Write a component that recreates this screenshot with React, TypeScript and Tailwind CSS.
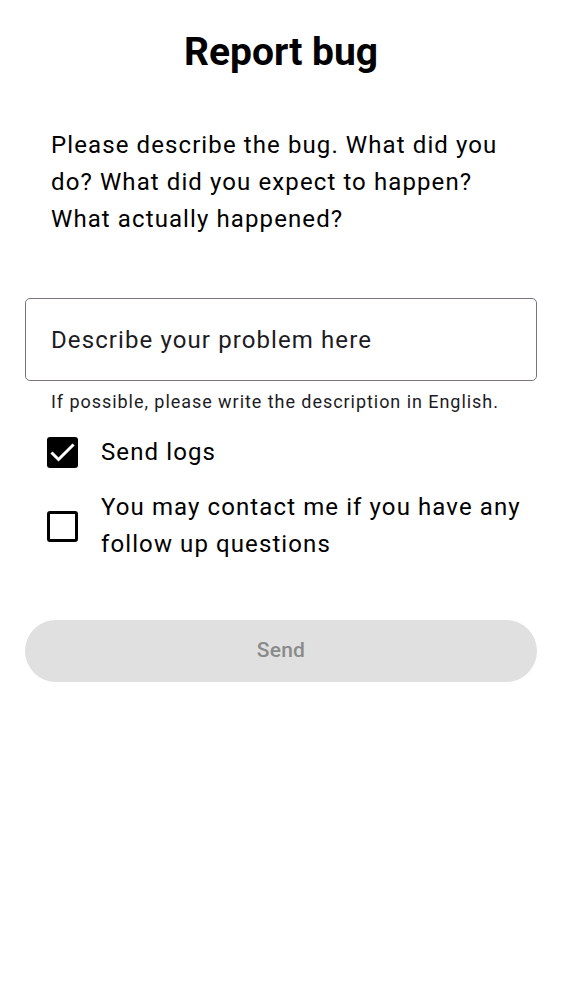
import { useState } from "react";

const CheckIcon = () => (
  <svg viewBox="0 0 31 31" className="w-[31px] h-[31px]" fill="none">
    <path d="M5.5 16.5l6 6L25.5 8.5" stroke="white" strokeWidth="3" strokeLinecap="square" />
  </svg>
);

const Checkbox = ({ checked, onChange }: { checked: boolean; onChange: () => void }) => (
  <button
    type="button"
    onClick={onChange}
    aria-pressed={checked}
    className={`w-[31px] h-[31px] shrink-0 rounded-[3px] flex items-center justify-center ${
      checked ? "bg-black" : "border-[3px] border-black bg-white"
    }`}
  >
    {checked && <CheckIcon />}
  </button>
);

export default function App() {
  const [sendLogs, setSendLogs] = useState(true);
  const [contact, setContact] = useState(false);
  const [text, setText] = useState("");

  return (
    <div
      className="min-h-[1000px] bg-white text-black px-[25px]"
      style={{ fontFamily: "Roboto, 'Noto Sans', sans-serif" }}
    >
      <h1 className="pt-[28px] text-center text-[39px] leading-[48px] font-bold">Report bug</h1>

      <p className="mt-[51px] px-[26px] text-[24px] leading-[37px] tracking-[1.1px]">
        Please describe the bug. What did you do? What did you expect to happen? What actually happened?
      </p>

      <div className="mt-[60px]">
        <input
          value={text}
          onChange={(e) => setText(e.target.value)}
          placeholder="Describe your problem here"
          className="w-full h-[83px] rounded-[5px] border-[1.5px] border-[#79747e] px-[25px] text-[24px] tracking-[1.1px] placeholder:text-[#1c1b1f] outline-none"
        />
        <p className="mt-[9px] px-[26px] text-[18px] leading-[24px] tracking-[0.95px] text-[#1c1b1f]">
          If possible, please write the description in English.
        </p>
      </div>

      <div className="mt-[20px] flex flex-col gap-[18px]">
        <label className="flex items-center gap-[23px] pl-[22px]">
          <Checkbox checked={sendLogs} onChange={() => setSendLogs(!sendLogs)} />
          <span className="text-[24px] leading-[37px] tracking-[1.1px]">Send logs</span>
        </label>
        <label className="flex items-center gap-[23px] pl-[22px]">
          <Checkbox checked={contact} onChange={() => setContact(!contact)} />
          <span className="text-[24px] leading-[37px] tracking-[1.1px]">
            You may contact me if you have any follow up questions
          </span>
        </label>
      </div>

      <button
        type="button"
        disabled
        className="mt-[57px] w-full h-[62px] rounded-full bg-[#e0e0e0] text-[#8a8a8a] text-[21px] font-medium tracking-[0.2px]"
      >
        Send
      </button>
    </div>
  );
}
